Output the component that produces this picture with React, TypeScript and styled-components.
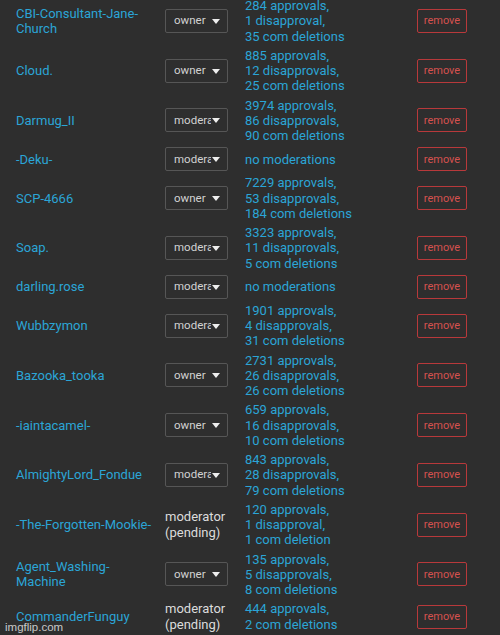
import styled, { createGlobalStyle } from 'styled-components';

type Mod = {
  name: string;
  role: 'owner' | 'moderator' | 'pending';
  stats: string[];
};

const mods: Mod[] = [
  { name: 'CBI-Consultant-Jane-Church', role: 'owner', stats: ['284 approvals,', '1 disapproval,', '35 com deletions'] },
  { name: 'Cloud.', role: 'owner', stats: ['885 approvals,', '12 disapprovals,', '25 com deletions'] },
  { name: 'Darmug_II', role: 'moderator', stats: ['3974 approvals,', '86 disapprovals,', '90 com deletions'] },
  { name: '-Deku-', role: 'moderator', stats: ['no moderations'] },
  { name: 'SCP-4666', role: 'owner', stats: ['7229 approvals,', '53 disapprovals,', '184 com deletions'] },
  { name: 'Soap.', role: 'moderator', stats: ['3323 approvals,', '11 disapprovals,', '5 com deletions'] },
  { name: 'darling.rose', role: 'moderator', stats: ['no moderations'] },
  { name: 'Wubbzymon', role: 'moderator', stats: ['1901 approvals,', '4 disapprovals,', '31 com deletions'] },
  { name: 'Bazooka_tooka', role: 'owner', stats: ['2731 approvals,', '26 disapprovals,', '26 com deletions'] },
  { name: '-iaintacamel-', role: 'owner', stats: ['659 approvals,', '16 disapprovals,', '10 com deletions'] },
  { name: 'AlmightyLord_Fondue', role: 'moderator', stats: ['843 approvals,', '28 disapprovals,', '79 com deletions'] },
  { name: '-The-Forgotten-Mookie-', role: 'pending', stats: ['120 approvals,', '1 disapproval,', '1 com deletion'] },
  { name: 'Agent_Washing-Machine', role: 'owner', stats: ['135 approvals,', '5 disapprovals,', '8 com deletions'] },
  { name: 'CommanderFunguy', role: 'pending', stats: ['444 approvals,', '2 com deletions'] },
];

const App = () => {
  return (
    <Page>
      <GlobalStyle />
      <List>
        {mods.map((mod) => (
          <Row key={mod.name}>
            <Name>{mod.name}</Name>
            {mod.role === 'pending' ? (
              <Pending>moderator<br />(pending)</Pending>
            ) : (
              <Select>
                <SelectText>{mod.role}</SelectText>
                <Arrow />
              </Select>
            )}
            <Stats>
              {mod.stats.map((line) => (
                <div key={line}>{line}</div>
              ))}
            </Stats>
            <RemoveButton>remove</RemoveButton>
          </Row>
        ))}
      </List>
      <Watermark>imgflip.com</Watermark>
    </Page>
  );
};

export default App;

const GlobalStyle = createGlobalStyle`
  html, body {
    margin: 0;
    background: #2e2e2e;
    overflow: hidden;
  }
`;

const Page = styled.div`
  position: relative;
  height: 635px;
  overflow: hidden;
  background: #2e2e2e;
  font-family: Roboto, "Liberation Sans", sans-serif;
  font-size: 13px;
  line-height: 15.25px;
  color: #2ba5d6;
`;

const List = styled.div`
  margin-top: -4px;
  padding-left: 16px;
`;

const Row = styled.div`
  display: grid;
  grid-template-columns: 149px 80px 172px 50px;
  align-items: center;
  padding: 2px 0;
`;

const Name = styled.div`
  padding-right: 6px;
`;

const Select = styled.div`
  box-sizing: border-box;
  width: 63px;
  height: 24px;
  border: 1px solid #565656;
  border-radius: 2px;
  display: flex;
  align-items: center;
  padding: 0 7px 0 8px;
  gap: 1px;
`;

const SelectText = styled.span`
  flex: 1;
  overflow: hidden;
  white-space: nowrap;
  font-size: 11.5px;
  color: #d2d2d2;
`;

const Arrow = styled.span`
  width: 0;
  height: 0;
  margin-top: 1px;
  border-left: 4px solid transparent;
  border-right: 4px solid transparent;
  border-top: 5px solid #eeeeee;
`;

const Pending = styled.div`
  color: #dcdcdc;
`;

const Stats = styled.div``;

const RemoveButton = styled.div`
  box-sizing: border-box;
  width: 50px;
  height: 24px;
  border: 1px solid #b8393b;
  border-radius: 2px;
  display: flex;
  align-items: center;
  justify-content: center;
  font-size: 11px;
  color: #d5514e;
`;

const Watermark = styled.div`
  position: absolute;
  left: 5px;
  bottom: 1px;
  font-family: "Liberation Sans", Arial, sans-serif;
  font-size: 11.5px;
  line-height: 14px;
  color: rgba(230, 230, 230, 0.85);
`;
